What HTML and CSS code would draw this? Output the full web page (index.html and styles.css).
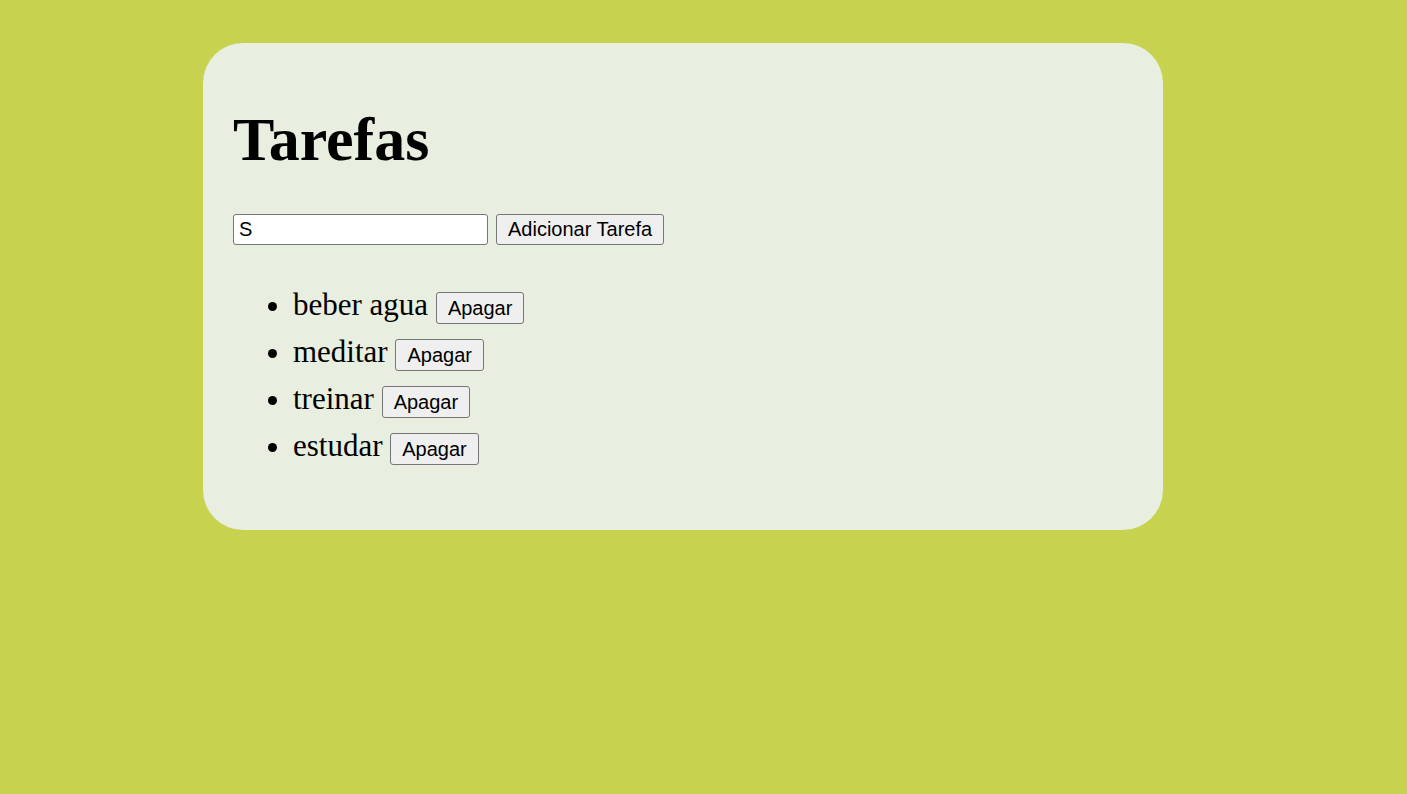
FILE: index.html
```html
<!DOCTYPE html>
<html lang="pt">
<head>
<meta charset="utf-8">
<title>Tarefas</title>
<link rel="stylesheet" href="styles.css">
</head>
<body>
<div class="card">
  <h1 class="title">Tarefas</h1>
  <div class="form-row">
    <input class="task-input" type="text" value="S">
    <button class="btn btn-add">Adicionar Tarefa</button>
  </div>
  <ul class="task-list">
    <li class="task">beber agua <button class="btn btn-del">Apagar</button></li>
    <li class="task">meditar <button class="btn btn-del">Apagar</button></li>
    <li class="task">treinar <button class="btn btn-del">Apagar</button></li>
    <li class="task">estudar <button class="btn btn-del">Apagar</button></li>
  </ul>
</div>
</body>
</html>
```

FILE: styles.css
```css
html, body {
  margin: 0;
  padding: 0;
}
body {
  background: #c7d34e;
  min-height: 794px;
  font-family: "Liberation Serif", "Times New Roman", serif;
  color: #000;
  padding-top: 43px;
  box-sizing: border-box;
}
.card {
  margin-left: 203px;
  width: 960px;
  box-sizing: border-box;
  padding: 30px;
  border-radius: 40px;
  background: #e8eee0;
}
.title {
  font-family: "Liberation Serif", "Times New Roman", serif;
  font-weight: bold;
  font-size: 62px;
  line-height: 72px;
  margin: 30px 0 0 0;
}
.form-row {
  display: flex;
  align-items: center;
  gap: 8px;
  margin-top: 39px;
}
.task-input {
  width: 255px;
  height: 31px;
  box-sizing: border-box;
  margin: 0;
  padding: 2px 5px;
  border: 1px solid #767676;
  border-radius: 3px;
  background: #fff;
  font-family: "Liberation Sans", Arial, sans-serif;
  font-size: 20px;
  color: #000;
}
.btn {
  margin: 0;
  box-sizing: border-box;
  padding: 3px 11px;
  border: 1px solid #767676;
  border-radius: 3px;
  background: #efefef;
  font-family: "Liberation Sans", Arial, sans-serif;
  font-size: 20px;
  line-height: 23px;
  color: #000;
}
.btn-add {
  height: 31px;
}
.btn-del {
  padding: 4px 11px;
  height: 32px;
}
.task-list {
  margin: 36px 0 31px 0;
  padding-left: 60px;
  font-size: 31px;
}
.task {
  line-height: 47px;
}
```
